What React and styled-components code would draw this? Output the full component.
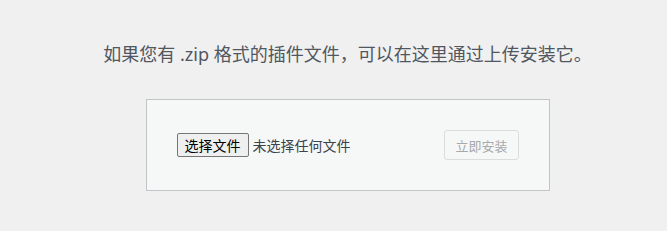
import React from "react";
import styled, { createGlobalStyle } from "styled-components";

const Global = createGlobalStyle`
  html, body { margin: 0; padding: 0; background: #f0f0f1; }
  body { font-family: "Segoe UI", "Noto Sans", "Noto Sans CJK SC", sans-serif; color: #3c434a; }
`;

const Page = styled.div`
  padding: 40px 0 0 28px;
  text-align: center;
`;

const Help = styled.p`
  margin: 0;
  color: #50575e;
  font-size: 18px;
  line-height: 29px;
  font-family: "Noto Sans", "Noto Sans CJK SC", sans-serif;
`;

const Form = styled.form`
  margin: 30px 0;
  box-sizing: border-box;
  width: 404px;
  padding: 30px;
  background: #f6f7f7;
  border: 1px solid #c3c4c7;
  display: inline-flex;
  justify-content: space-between;
  align-items: center;
  text-align: left;
`;

const FilePicker = styled.label`
  display: inline-flex;
  align-items: center;
  font-family: "Noto Sans CJK SC", sans-serif;
  font-size: 14px;
  color: #3c434a;
`;

const ChooseButton = styled.span`
  display: inline-flex;
  align-items: center;
  box-sizing: border-box;
  height: 24px;
  padding: 0 7px;
  margin-right: 4px;
  border: 1px solid #767676;
  border-radius: 2px;
  background: #efefef;
  color: #000;
  font-size: 14px;
`;

const InstallButton = styled.button`
  box-sizing: border-box;
  height: 30px;
  padding: 0 10px;
  border: 1px solid #dcdcde;
  border-radius: 3px;
  background: #f6f7f7;
  color: #a7aaad;
  font-family: "Noto Sans CJK SC", sans-serif;
  font-size: 13px;
  cursor: default;
`;

export default function App() {
  return (
    <>
      <Global />
      <Page>
        <Help>如果您有 .zip 格式的插件文件，可以在这里通过上传安装它。</Help>
        <Form onSubmit={(e) => e.preventDefault()}>
          <FilePicker>
            <ChooseButton>选择文件</ChooseButton>
            未选择任何文件
          </FilePicker>
          <InstallButton type="button" disabled>立即安装</InstallButton>
        </Form>
      </Page>
    </>
  );
}
